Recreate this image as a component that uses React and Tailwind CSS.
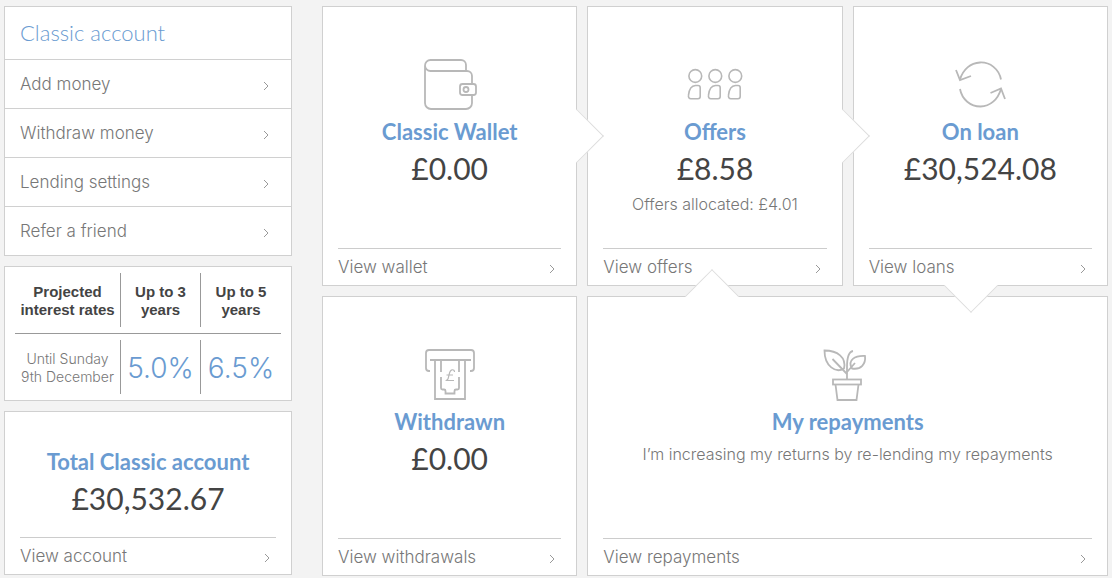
import React from 'react';

const sidebarLinks = ['Add money', 'Withdraw money', 'Lending settings', 'Refer a friend'];

const iconProps = {
  fill: 'none',
  stroke: '#b8b8b8',
  strokeWidth: 1.8,
  'aria-hidden': true
};

const WalletIcon = () => (
  <svg width="56" height="56" viewBox="0 0 56 56" {...iconProps}>
    <path d="M44 14V9a5 5 0 0 0-5-5H8.500a5.500 5.500 0 0 0 0 11H45a5 5 0 0 1 5 5v8M50 39v8a6 6 0 0 1-6 6H9a6 6 0 0 1-6-6V10" />
    <rect x="38" y="28" width="16" height="11" rx="2.500" />
    <circle cx="44" cy="33.500" r="2.500" />
  </svg>
);

const PeopleIcon = () => (
  <svg width="56" height="56" viewBox="0 0 56 56" {...iconProps} strokeWidth="1.600">
    {[0, 20, 40].map((x) => (
      <g key={x} transform={`translate(${x} 0)`}>
        <circle cx="8.300" cy="20" r="6.400" />
        <path d="M8.500 29.500h2.500q2.200 0 2.200 2.200v8.800q0 2.200-2.200 2.200H4q-3 0-2.500-3.500 1-9.500 7-9.700z" />
      </g>
    ))}
  </svg>
);

const CycleIcon = () => (
  <svg width="56" height="56" viewBox="0 0 56 56" {...iconProps}>
    <path d="M49 23.500C47 13 38 6 28 6.500 18.500 7 11 13.500 8 23.500" />
    <path d="M4 14l4 10 11-4" />
    <path d="M8 33c2 10.500 10.500 17.500 20.500 17.500C38 50.500 46 43.500 49 33" />
    <path d="M38.500 37L49 32.500 53 43" />
  </svg>
);

const WithdrawIcon = () => (
  <svg width="56" height="56" viewBox="0 0 56 56" {...iconProps}>
    <path d="M8 25H7q-3 0-3-3V7q0-3 3-3h42q3 0 3 3v15q0 3-3 3h-1" />
    <path d="M8 14h41M13 14v39h30V14M19 14v12M37 14v12" />
    <path d="M19 31v11q0 1.500 1.500 1.500H22q1.500 0 1.500 1.500v2.500h9V45q0-1.500 1.500-1.500h1.500q1.500 0 1.500-1.500V31" />
    <path strokeWidth="1.200" d="M32.500 26q0-2.500-2.500-2.200c-3 .5-2.500 5-4 9.200l-1.500 1.500H32M24.500 29h6.500" />
  </svg>
);

const PlantIcon = () => (
  <svg width="56" height="56" viewBox="0 0 56 56" {...iconProps}>
    <rect x="13" y="33.500" width="28" height="5" />
    <path d="M15.500 38.500l2 15.500h19l2-15.500" />
    <path d="M27 33.500V21c0-5 0-15 6-16" />
    <path d="M4.500 4.500c13 0 22 7 19.500 18-8 5-19.500-2-19.500-18z" />
    <path d="M12.500 13L27 28M27 26l8-9" />
    <path d="M45 10c1 8-4 14-13 12.500C27 14 35 9.500 45 10z" />
  </svg>
);

const Chevron = () => (
  <svg width="6" height="10" viewBox="0 0 6 10" fill="none" stroke="#999" aria-hidden="true" className="mt-[3px]">
    <path d="M1 1l4 4-4 4" />
  </svg>
);

const CardFooter = ({ label }) => (
  <a href="#" className="mx-[15px] mt-auto flex h-[37px] items-center justify-between border-t border-[#ccc] pr-[6px] pt-px text-[17px]">
    {label}
    <Chevron />
  </a>
);

const CardTitle = ({ children }) => (
  <h2 className="font-[Lato,sans-serif] text-[22px] font-bold leading-[36px] text-[#6a9bd1]">{children}</h2>
);

const Amount = ({ children }) => (
  <p className="font-[Lato,sans-serif] text-[30px] font-normal leading-[36px] text-[#444]">{children}</p>
);

const Card = ({ icon, title, amount, note, link, className = '', children }) => (
  <section className={`relative flex min-h-[280px] flex-col border border-[#d0d0d0] bg-white text-center ${className}`}>
    <div className="flex flex-col items-center px-4 pt-[49px]">
      {icon}
      <div className="pt-[2px]">
        <CardTitle>{title}</CardTitle>
        {amount && (
          <div className="pb-1">
            <Amount>{amount}</Amount>
          </div>
        )}
        {note && <p className="text-[16px] leading-[28px]">{note}</p>}
      </div>
    </div>
    <CardFooter label={link} />
    {children}
  </section>
);

const RightArrow = () => (
  <span className="absolute -right-5 top-[110px] z-10 size-[38px] rotate-45 border-r border-t border-[#ddd] bg-white" />
);

const App = () => {
  return (
    <div className="min-h-screen bg-[#f3f3f3] px-1 pt-[6px] font-[Inter,'Liberation_Sans',sans-serif] font-light text-[#777]">
      <div className="flex items-start gap-[30px]">
        <aside className="flex w-[288px] shrink-0 flex-col gap-[10px]">
          <nav className="border border-[#d0d0d0] bg-white">
            <h1 className="px-[15px] font-[Lato,sans-serif] text-[22px] font-light leading-[52px] text-[#6a9bd1]">
              Classic account
            </h1>
            {sidebarLinks.map((label) => (
              <a
                key={label}
                href="#"
                className="flex h-[49px] items-center justify-between border-t border-[#d0d0d0] pl-[15px] pr-[22px] pt-px text-[17px]"
              >
                {label}
                <Chevron />
              </a>
            ))}
          </nav>

          {/* Projected rates */}
          <div className="border border-[#d0d0d0] bg-white px-[10px]">
            <table className="w-full table-fixed border-collapse text-center text-[15px] leading-[18px]">
              <thead>
                <tr className="border-b border-[#999] font-['Liberation_Sans',sans-serif] text-[#444]">
                  <th className="w-[106px] py-[6px]">
                    <div className="flex h-[54px] items-center justify-center border-r border-[#999] pt-px">Projected<br />interest rates</div>
                  </th>
                  <th className="w-[80px] py-[6px]">
                    <div className="flex h-[54px] items-center justify-center border-r border-[#999] px-3 pt-px">Up to 3 years</div>
                  </th>
                  <th className="py-[6px]">
                    <div className="flex h-[54px] items-center justify-center px-3 pt-px">Up to 5 years</div>
                  </th>
                </tr>
              </thead>
              <tbody>
                <tr>
                  <td className="py-[6px] text-[14px]">
                    <div className="flex h-[54px] items-center justify-center border-r border-[#999] pt-px">Until Sunday<br />9th December</div>
                  </td>
                  <td className="py-[6px] text-[28px] text-[#6a9bd1]">
                    <div className="flex h-[54px] items-center justify-center border-r border-[#999] pt-px">5.0%</div>
                  </td>
                  <td className="py-[6px] text-[28px] text-[#6a9bd1]">
                    <div className="flex h-[54px] items-center justify-center pt-px">6.5%</div>
                  </td>
                </tr>
              </tbody>
            </table>
          </div>

          <section className="flex min-h-[164px] flex-col border border-[#d0d0d0] bg-white text-center">
            <div className="pt-8">
              <CardTitle>Total Classic account</CardTitle>
              <Amount>£30,532.67</Amount>
            </div>
            <CardFooter label="View account" />
          </section>
        </aside>

        {/* Money flow */}
        <main className="grid min-w-0 flex-1 grid-cols-3 gap-[10px]">
          <Card icon={<WalletIcon />} title="Classic Wallet" amount="£0.00" link="View wallet">
            <RightArrow />
          </Card>
          <Card
            icon={<PeopleIcon />}
            title="Offers"
            amount="£8.58"
            note="Offers allocated: £4.01"
            link="View offers"
          >
            <RightArrow />
          </Card>
          <Card icon={<CycleIcon />} title="On loan" amount="£30,524.08" link="View loans">
            <span className="absolute -bottom-5 left-[98px] z-10 size-[38px] rotate-45 border-b border-r border-[#ddd] bg-white" />
          </Card>
          <Card icon={<WithdrawIcon />} title="Withdrawn" amount="£0.00" link="View withdrawals" />
          <Card
            className="col-span-2"
            icon={<PlantIcon />}
            title="My repayments"
            note="I’m increasing my returns by re-lending my repayments"
            link="View repayments"
          >
            <span className="absolute -top-5 left-[105px] z-10 size-[38px] rotate-45 border-l border-t border-[#ddd] bg-white" />
          </Card>
        </main>
      </div>
    </div>
  );
};

export default App;
